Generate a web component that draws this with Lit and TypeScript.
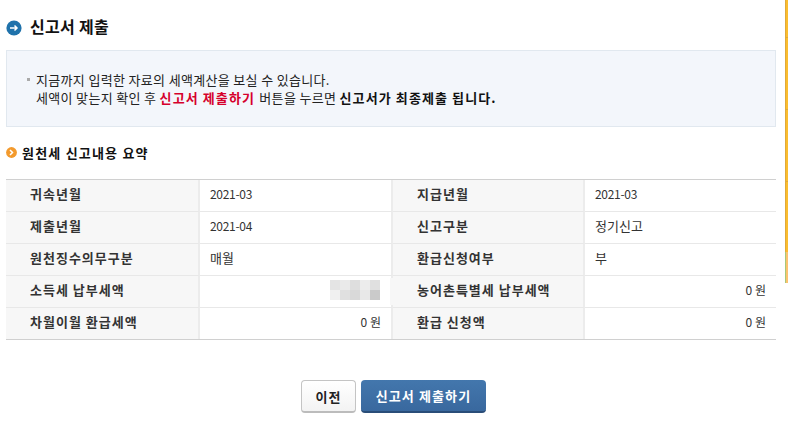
import { LitElement, html, css } from "lit";
import { customElement } from "lit/decorators.js";

const rows: [string, string, boolean, string, string][] = [
  ["귀속년월", "2021-03", false, "지급년월", "2021-03"],
  ["제출년월", "2021-04", false, "신고구분", "정기신고"],
  ["원천징수의무구분", "매월", false, "환급신청여부", "부"],
  ["소득세 납부세액", "", true, "농어촌특별세 납부세액", "0 원"],
  ["차월이월 환급세액", "0 원", true, "환급 신청액", "0 원"],
];
const blur = ["#e4e4e4","#eaeaea","#dedede","#ececec","#e0e0e0","#f0f0f0","#e0e0e0","#d9d9d9","#e8e8e8","#cacaca"];

@customElement("app-root")
export class AppRoot extends LitElement {
  static styles = css`
    :host { display: block; width: 788px; height: 427px; position: relative; overflow: hidden; background: #fff;
      font-family: "Noto Sans CJK KR", "Noto Sans", sans-serif; color: #222; font-size: 12px; }
    .wrap { padding: 18px 12px 0 6px; display: flex; flex-direction: column; }
    .title { display: flex; align-items: center; gap: 8px; height: 19px; font-size: 16px; line-height: 19px; font-weight: 700; color: #111; letter-spacing: .3px; }
    .title span { position: relative; top: -1px; }
    .box { margin-top: 13px; height: 75px; border: 1px solid #e1e8ef; background: #f3f6fb; box-sizing: content-box;
      display: flex; flex-direction: column; justify-content: center; padding-left: 20px; line-height: 18px; font-size: 13px; letter-spacing: .33px; color: #222; }
    .line { display: flex; align-items: center; }
    .dot { width: 3px; height: 3px; background: #aaa; margin-right: 6px; }
    .indent { padding-left: 9px; }
    .red { color: #d6002c; font-weight: 700; letter-spacing: 1.1px; margin-right: 1px; }
    .strong { color: #111; font-weight: 700; letter-spacing: 1.1px; }
    .sub { margin-top: 16px; height: 19px; display: flex; align-items: center; gap: 5px; font-size: 13px; font-weight: 700; color: #111; letter-spacing: 1.2px; }
    .table { margin-top: 17px; display: grid; grid-template-columns: 194px 193px 192px 191px; grid-template-rows: repeat(4, 32px) 31px;
      border-top: 1px solid #d0d0d0; border-bottom: 1px solid #d0d0d0; width: 770px; }
    .cell { display: flex; align-items: center; border-bottom: 1px solid #e8e8e8; border-right: 2px solid #ececec; box-sizing: border-box; font-size: 12px; padding-bottom: 5px; }
    .cell.last { border-bottom: 0; }
    .end { border-right: 0; }
    .label { background: #f7f7f7; padding-left: 24px; font-size: 13px; font-weight: 700; color: #333; letter-spacing: 1px; }
    .patch { position: relative; }
    .patch::before { content: ""; position: absolute; left: -3px; width: 3px; top: 2px; bottom: 2px; background: #f7f7f7; }
    .value { padding-left: 10px; color: #333; letter-spacing: -.3px; }
    .hangul { font-size: 13px; letter-spacing: 0; }
    .num { justify-content: flex-end; padding-right: 10px; padding-left: 0; letter-spacing: 0; }
    .blur { display: grid; grid-template-columns: repeat(5, 10px); grid-auto-rows: 10px; margin: 2px 1px 0 0; }
    .actions { margin-top: 40px; display: flex; justify-content: center; gap: 5px; padding-left: 5px; }
    button { font-family: inherit; font-weight: 700; font-size: 13px; height: 33px; border-radius: 4px; padding: 0; letter-spacing: 1.1px; }
    .prev { width: 55px; background: linear-gradient(#fff, #f3f3f3); border: 1px solid #c4c4c4; border-bottom: 2px solid #bcbcbc; color: #222; }
    .submit { width: 125px; background: linear-gradient(#4377ad, #39689e); border: 0; border-bottom: 2px solid #2a4d78; color: #fff; }
    .side { position: absolute; right: 0; top: 0; width: 3px; height: 283px; display: flex; flex-direction: column; }
    .seg { background: #fbbd2e; border-left: 1px solid #e0a93a; border-bottom: 1px solid #e0a93a; box-sizing: border-box; }
    .seg.tail { background: #fbc36f; border-left-color: #a8c878; border-bottom: 0; flex: 1; }
    .seg.flat { border-bottom: 0; }
  `;

  render() {
    return html`
      <div class="wrap">
        <div class="title">
          <svg width="16" height="16" viewBox="0 0 16 16">
            <circle cx="8" cy="8" r="7.6" fill="#1f72ab"/>
            <path d="M4 8h7M8.5 5.5 11 8l-2.5 2.5" fill="none" stroke="#fff" stroke-width="1.5"/>
          </svg>
          <span>신고서 제출</span>
        </div>
        <div class="box">
          <div class="line"><span class="dot"></span><span>지금까지 입력한 자료의 세액계산을 보실 수 있습니다.</span></div>
          <div class="indent">세액이 맞는지 확인 후 <span class="red">신고서 제출하기</span> 버튼을 누르면 <span class="strong">신고서가 최종제출 됩니다.</span></div>
        </div>
        <div class="sub">
          <svg width="11" height="11" viewBox="0 0 11 11">
            <circle cx="5.5" cy="5.5" r="5.4" fill="#f39a2d"/>
            <path d="M4 3l2.5 2.5L4 8" fill="none" stroke="#fff" stroke-width="1.5"/>
          </svg>
          <span>원천세 신고내용 요약</span>
        </div>
        <div class="table">
          ${rows.map((r, i) => {
            const last = i === rows.length - 1 ? "last" : "";
            const cls = (v: string) => (v === "0 원" ? "num" : /\d/.test(v) ? "" : "hangul");
            return html`
              <div class="cell label ${last}">${r[0]}</div>
              <div class="cell value ${last} ${i === 3 ? "num" : cls(r[1])}">
                ${i === 3 ? html`<div class="blur">${blur.map((c) => html`<span style="background:${c}"></span>`)}</div>` : r[1]}
              </div>
              <div class="cell label ${last} ${i === 3 ? "patch" : ""}">${r[3]}</div>
              <div class="cell value end ${last} ${cls(r[4])}">${r[4]}</div>`;
          })}
        </div>
        <div class="actions">
          <button class="prev">이전</button>
          <button class="submit">신고서 제출하기</button>
        </div>
      </div>
      <div class="side">
        <div class="seg" style="height:38px"></div>
        <div class="seg" style="height:72px"></div>
        <div class="seg" style="height:72px"></div>
        <div class="seg flat" style="height:70px"></div>
        <div class="seg tail"></div>
      </div>
    `;
  }
}
